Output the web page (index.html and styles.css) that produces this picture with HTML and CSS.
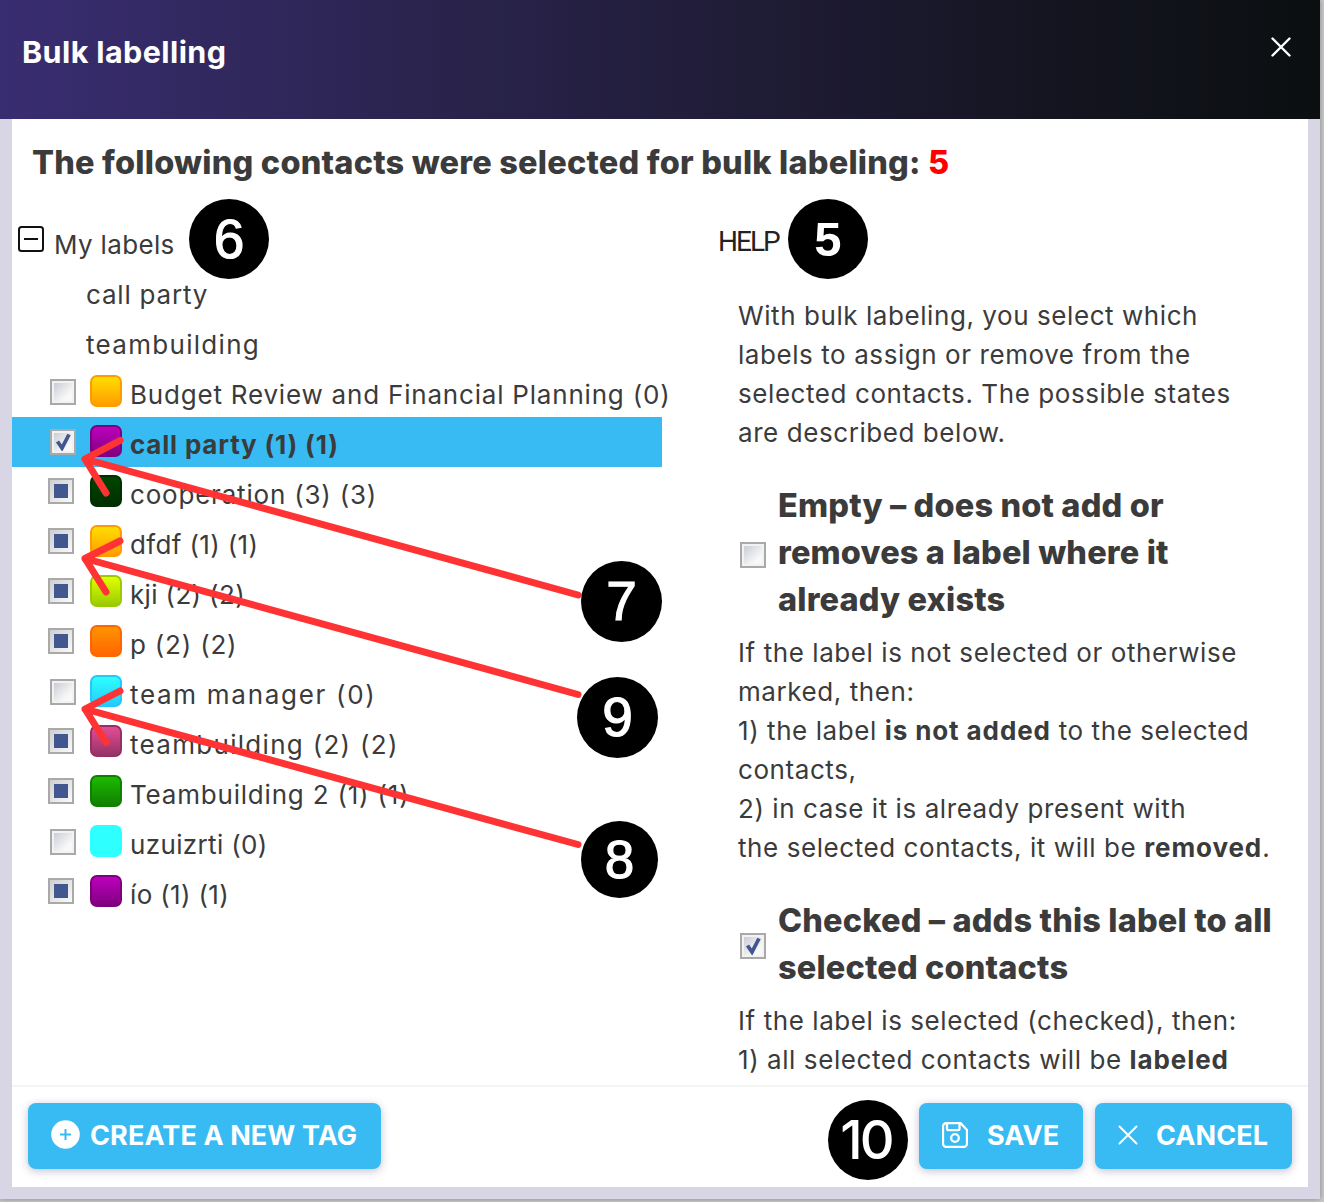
FILE: index.html
```html
<!DOCTYPE html>
<html lang="en">
<head>
    <meta charset="UTF-8">
    <meta name="viewport" content="width=device-width, initial-scale=1.0">
    <title>Bulk labelling</title>
    <link rel="stylesheet" href="styles.css">
</head>
<body>
    <div class="modal">
        <!-- Header -->
        <div class="modal-header">
            <h1>Bulk labelling</h1>
            <svg class="close" width="20" height="20" viewBox="0 0 20 20">
                <path d="M1.5 1.5 L18.5 18.5 M18.5 1.5 L1.5 18.5"/>
            </svg>
        </div>

        <div class="modal-body">
            <h2>The following contacts were selected for bulk labeling: <span class="count">5</span></h2>

            <div class="columns">
                <!-- Label tree -->
                <div class="tree">
                    <div class="row root">
                        <svg width="26" height="26" viewBox="0 0 26 26">
                            <rect x="1" y="1" width="24" height="24" rx="2.5"/>
                            <path d="M6 13 H20"/>
                        </svg>
                        <span class="name tight">My labels</span>
                    </div>
                    <div class="row sub"><span class="name">call party</span></div>
                    <div class="row sub"><span class="name wide">teambuilding</span></div>
                    <div class="row"><i class="box"></i><i class="swatch yellow"></i><span class="name">Budget Review and Financial Planning (0)</span></div>
                    <div class="row selected"><i class="box"><svg viewBox="0 0 18 18"><path d="M3.500 8.500 L8 15 L15 1.500"/></svg></i><i class="swatch purple"></i><span class="name">call party (1) (1)</span></div>
                    <div class="row"><i class="box partial"></i><i class="swatch dark"></i><span class="name">cooperation (3) (3)</span></div>
                    <div class="row"><i class="box partial"></i><i class="swatch yellow"></i><span class="name tight">dfdf (1) (1)</span></div>
                    <div class="row"><i class="box partial"></i><i class="swatch lime"></i><span class="name tight">kji (2) (2)</span></div>
                    <div class="row"><i class="box partial"></i><i class="swatch orange"></i><span class="name">p (2) (2)</span></div>
                    <div class="row"><i class="box"></i><i class="swatch sky"></i><span class="name wider">team manager (0)</span></div>
                    <div class="row"><i class="box partial"></i><i class="swatch pink"></i><span class="name wide">teambuilding (2) (2)</span></div>
                    <div class="row"><i class="box partial"></i><i class="swatch green"></i><span class="name">Teambuilding 2 (1) (1)</span></div>
                    <div class="row"><i class="box"></i><i class="swatch cyan"></i><span class="name tight">uzuizrti (0)</span></div>
                    <div class="row"><i class="box partial"></i><i class="swatch purple"></i><span class="name tight">ío (1) (1)</span></div>
                </div>

                <!-- Help -->
                <div class="help">
                    <div class="help-title">HELP</div>
                    <p>With bulk labeling, you select which<br>labels to assign or remove from the<br>selected contacts. The possible states<br>are described below.</p>
                    <div class="state">
                        <i class="box"></i>
                        <h3>Empty – does not add or<br>removes a label where it<br>already exists</h3>
                    </div>
                    <p>If the label is not selected or otherwise<br>marked, then:<br>1) the label <b>is not added</b> to the selected<br>contacts,<br>2) in case it is already present with<br>the selected contacts, it will be <b>removed</b>.</p>
                    <div class="state">
                        <i class="box"><svg viewBox="0 0 18 18"><path d="M3.500 8.500 L8 15 L15 1.500"/></svg></i>
                        <h3>Checked – adds this label to all<br>selected contacts</h3>
                    </div>
                    <p>If the label is selected (checked), then:<br>1) all selected contacts will be <b>labeled</b></p>
                </div>
            </div>
        </div>

        <!-- Footer buttons -->
        <div class="modal-footer">
            <button class="create">
                <svg width="29" height="29" viewBox="0 0 29 29">
                    <circle cx="14.5" cy="14.5" r="14.3" fill="#fff"/>
                    <path d="M9 14.5 H20 M14.5 9 V20" stroke="#38baf2" stroke-width="2"/>
                </svg>
                <span>CREATE A NEW TAG</span>
            </button>
            <button class="save">
                <svg width="26" height="26" viewBox="0 0 26 26">
                    <path d="M4.500 1 H18.500 L25 8 V21.500 a3.500 3.500 0 0 1 -3.500 3.500 H4.500 a3.500 3.500 0 0 1 -3.500 -3.500 V4.500 a3.500 3.500 0 0 1 3.500 -3.500 Z M5 1.500 V7 a1.200 1.200 0 0 0 1.200 1.200 H16.300 a1.200 1.200 0 0 0 1.200 -1.200 V1.500"/>
                    <circle cx="13" cy="16" r="3.800"/>
                </svg>
                <span>SAVE</span>
            </button>
            <button class="cancel">
                <svg width="20" height="20" viewBox="0 0 20 20">
                    <path d="M1.500 1.500 L18.500 18.500 M18.500 1.500 L1.500 18.500"/>
                </svg>
                <span>CANCEL</span>
            </button>
        </div>
    </div>

    <!-- Arrows and step numbers on top of the dialog -->
    <svg class="arrows" width="1324" height="1202" viewBox="0 0 1324 1202">
        <path d="M578 595 L85 459 M120 440.500 L85 459 L106 493"/>
        <path d="M578 694.500 L85 558.500 M120 541 L85 558.500 L106 592"/>
        <path d="M578 844.500 L85 709 M120 691 L85 709 L106 742.500"/>
    </svg>
    <div class="badge b5">5</div>
    <div class="badge b6">6</div>
    <div class="badge b7">7</div>
    <div class="badge b8">8</div>
    <div class="badge b9">9</div>
    <div class="badge b10">10</div>
</body>
</html>
```
FILE: styles.css
```css
* {
    box-sizing: border-box;
}

body {
    font-family: Inter, "Open Sans", sans-serif;
    margin: 0;
    height: 1202px;
    overflow: hidden;
    background-color: #cacaca;
    color: #3b3b3b;
}

h1, h2, h3, p {
    margin: 0;
    white-space: nowrap;
}

.modal {
    width: 1320px;
    height: 1199px;
    display: flex;
    flex-direction: column;
    background-color: #d8d5e4;
    box-shadow: 0 0 6px rgba(0,0,0,0.35);
}

.modal-header {
    height: 119px;
    flex-shrink: 0;
    display: flex;
    justify-content: space-between;
    padding: 32px 29px 0 22px;
    color: #fff;
    background: linear-gradient(90deg, #392d71 0%, #29234b 35%, #171625 75%, #0b0f10 100%);
}

.modal-header h1 {
    font-size: 30.5px;
    line-height: 40px;
    font-weight: 700;
    letter-spacing: 0.4px;
}

.close {
    margin-top: 5px;
}

.close path, .cancel path {
    fill: none;
    stroke: #fff;
    stroke-width: 2.4;
    stroke-linecap: round;
}

.cancel path {
    stroke-width: 2;
}

.modal-body {
    height: 966px;
    flex-shrink: 0;
    margin: 0 12px;
    overflow: hidden;
    background-color: #fff;
}

.modal-body h2 {
    height: 98px;
    padding: 24px 0 0 20px;
    font-size: 32.5px;
    line-height: 40px;
    font-weight: 800;
    letter-spacing: 0.2px;
}

.count {
    color: #f00;
}

.columns {
    display: flex;
}

/* Label tree */
.tree {
    width: 650px;
    margin-right: 56px;
    flex-shrink: 0;
}

.row {
    height: 50px;
    display: flex;
    align-items: flex-start;
    padding: 8px 0 0 38px;
    font-size: 26px;
    line-height: 40px;
    letter-spacing: 0.8px;
    white-space: nowrap;
}

.name.tight {
    letter-spacing: 0.35px;
}

.name.wide {
    letter-spacing: 1.3px;
}

.name.wider {
    letter-spacing: 1.7px;
}

.row.root {
    padding-left: 6px;
}

.root svg {
    margin: 1px 10px 0 0;
    fill: none;
    stroke: #111;
    stroke-width: 2;
}

.row.sub {
    padding-left: 74px;
}

.row.selected {
    background-color: #38baf2;
    font-weight: 700;
}

.box {
    width: 26px;
    height: 26px;
    flex-shrink: 0;
    padding: 2px;
    border: 2px solid #a8a9a8;
    background: linear-gradient(135deg, #c9ced6, #f8f8f8 75%) content-box, #f2f2f2;
}

.row .box {
    margin: 4px 14px 0 0;
}

.box svg {
    display: block;
    width: 18px;
    height: 18px;
    fill: none;
    stroke: #44568f;
    stroke-width: 3.8;
}

.row .box.partial {
    margin: 3px 16px 0 -2px;
    padding: 4px;
    background: linear-gradient(#42568f, #42568f) content-box, linear-gradient(135deg, #cfcfcf, #fafafa);
}

.swatch {
    width: 32px;
    height: 32px;
    flex-shrink: 0;
    margin-right: 8px;
    border: 2px solid;
    border-radius: 7px;
}

.yellow { background: linear-gradient(#ffde00, #ff9d00); border-color: #ff9b00; }
.purple { background: linear-gradient(#bd00bd, #800080); border-color: #7e007e; }
.dark { background: linear-gradient(#004600, #002f00); border-color: #002f00; }
.lime { background: linear-gradient(#e2ff00, #9acc00); border-color: #98cc00; }
.orange { background: linear-gradient(#ff9400, #ff6600); border-color: #ff6600; }
.sky { background: linear-gradient(#2effff, #24ccff); border-color: #24c8ff; }
.pink { background: linear-gradient(#e44c95, #963366); border-color: #943062; }
.green { background: linear-gradient(#1dba00, #118000); border-color: #108000; }
.cyan { background: #2effff; border-color: #2effff; }

/* Help column */
.help-title {
    padding-top: 5px;
    margin-bottom: 39px;
    font-family: Roboto, sans-serif;
    font-size: 28px;
    line-height: 40px;
    height: 40px;
    color: #222;
    letter-spacing: -2px;
}

.help p {
    margin-left: 20px;
    font-size: 26px;
    line-height: 39px;
    letter-spacing: 0.57px;
}

.help b {
    letter-spacing: 0.9px;
}

.state {
    display: flex;
    align-items: center;
    margin: 30px 0 10px 22px;
}

.state .box {
    margin: 4px 12px 0 0;
}

.state h3 {
    font-size: 32.5px;
    line-height: 47px;
    font-weight: 800;
    letter-spacing: 0.15px;
}

/* Footer */
.modal-footer {
    height: 102px;
    flex-shrink: 0;
    display: flex;
    margin: 0 12px;
    padding: 16px 16px 0;
    border-top: 2px solid #f4f4f4;
    background-color: #fff;
}

button {
    height: 66px;
    display: flex;
    align-items: center;
    padding: 0 0 2px;
    border: none;
    border-radius: 8px;
    background-color: #38baf2;
    color: #fff;
    box-shadow: 0 2px 8px rgba(60,45,113,0.3);
    font-family: inherit;
    font-size: 27px;
    font-weight: 700;
    letter-spacing: 0.1px;
    white-space: nowrap;
}

button svg {
    flex-shrink: 0;
}

.create {
    width: 353px;
    padding-left: 23px;
    margin-right: auto;
}

.create svg {
    margin: -1px 10px 0 0;
}

.save {
    width: 164px;
    padding-left: 23px;
    margin-right: 12px;
}

.save svg {
    margin-right: 19px;
    fill: none;
    stroke: #fff;
    stroke-width: 2.3;
}

.cancel {
    width: 197px;
    padding-left: 23px;
}

.cancel svg {
    margin-right: 18px;
}

/* Overlay */
.arrows {
    position: absolute;
    left: 0;
    top: 0;
    fill: none;
    stroke: #ff3333;
    stroke-width: 7;
    stroke-linecap: round;
    stroke-linejoin: round;
}

.badge {
    position: absolute;
    width: 80px;
    height: 80px;
    border-radius: 50%;
    background-color: #000;
    color: #fff;
    font-family: "Liberation Sans", Arial, sans-serif;
    font-size: 55px;
    line-height: 80px;
    text-align: center;
    -webkit-text-stroke: 1.2px #fff;
}

.b5 { left: 788px; top: 199px; font-size: 49px; font-weight: 700; -webkit-text-stroke: 0; }
.b6 { left: 189px; top: 199px; }
.b7 { left: 581px; top: 561px; width: 81px; height: 81px; }
.b8 { left: 581px; top: 821px; width: 77px; height: 77px; font-size: 53px; line-height: 77px; }
.b9 { left: 577px; top: 677px; width: 81px; height: 81px; }
.b10 { left: 828px; top: 1100px; font-family: Inter, sans-serif; font-size: 54px; font-weight: 500; letter-spacing: -3px; text-indent: -4px; -webkit-text-stroke: 0; }
```
